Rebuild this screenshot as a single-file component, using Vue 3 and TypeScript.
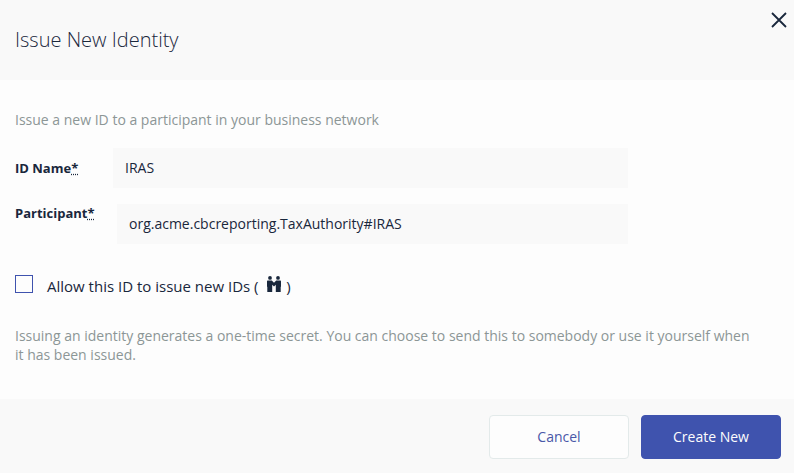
<script setup lang="ts">
import { ref } from 'vue'

const idName = ref('IRAS')
const participant = ref('org.acme.cbcreporting.TaxAuthority#IRAS')
const canIssue = ref(false)
</script>

<template>
  <form class="dialog" @submit.prevent>
    <header class="head">
      <h1>Issue New Identity</h1>
      <button class="close" type="button" aria-label="Close">
        <svg width="16" height="16" viewBox="0 0 16 16" fill="none" stroke="currentColor" stroke-width="1.8">
          <path d="M1 1L15 15M15 1L1 15" />
        </svg>
      </button>
    </header>

    <section class="body">
      <p>Issue a new ID to a participant in your business network</p>

      <div class="fields">
        <div class="field">
          <label for="id-name">ID Name<abbr>*</abbr></label>
          <input id="id-name" v-model="idName" type="text" />
        </div>
        <div class="field participant">
          <label for="participant">Participant<abbr>*</abbr></label>
          <input id="participant" v-model="participant" type="text" />
        </div>
      </div>

      <div class="check">
        <input id="can-issue" v-model="canIssue" type="checkbox" />
        <label for="can-issue">
          Allow this ID to issue new IDs (
          <svg class="people" width="16" height="16" viewBox="0 0 16 16" fill="currentColor" aria-hidden="true">
            <circle cx="4" cy="1.9" r="1.9" />
            <circle cx="12" cy="1.9" r="1.9" />
            <path d="M1.6 4.6H5.8L8 6.8L10.2 4.6H14.4Q15 4.6 15 5.4V10.8H14.7V16H9.8V8.8L8 10.4L6.2 8.8V16H1.3V10.8H1V5.4Q1 4.6 1.6 4.6Z" />
          </svg>
          )
        </label>
      </div>

      <p class="note">
        Issuing an identity generates a one-time secret. You can choose to send this to
        somebody or use it yourself when it has been issued.
      </p>
    </section>

    <footer class="foot">
      <button class="btn cancel" type="button">Cancel</button>
      <button class="btn create" type="submit">Create New</button>
    </footer>
  </form>
</template>

<style>
body {
  background: #fdfdfd;
}
</style>

<style scoped>
.dialog,
.dialog input,
.dialog button {
  font-family: 'Open Sans', 'Noto Sans', sans-serif;
  font-size: 14px;
  color: #19273c;
  box-sizing: border-box;
}

.dialog {
  display: flex;
  flex-direction: column;
  min-height: 100vh;
  background: #fdfdfd;
}

.head {
  display: flex;
  justify-content: space-between;
  align-items: flex-start;
  padding: 12px 7px 12px 15px;
  background: #f9f9f9;
}

h1 {
  margin: 0;
  padding: 14px 0;
  font-size: 20px;
  font-weight: 300;
  line-height: 28px;
}

.close {
  display: flex;
  padding: 0;
  border: 0;
  background: none;
}

.body {
  flex: 1;
  padding: 30px 15px 34px;
}

p {
  margin: 0;
  line-height: 19px;
  color: #8c9696;
}

.note {
  padding-right: 24px;
}

.fields {
  display: flex;
  flex-direction: column;
  gap: 16px;
  max-width: 613px;
  padding: 19px 0 30px;
}

.field {
  display: grid;
  grid-template-columns: 98px 1fr;
  align-items: center;
}

.field.participant {
  grid-template-columns: 102px 1fr;
  align-items: start;
}

.field label {
  font-size: 13px;
  font-weight: 700;
  line-height: 18px;
}

abbr {
  text-decoration: underline dotted;
}

.field input {
  width: 100%;
  height: 40px;
  padding: 0 12px 2px;
  border: 0;
  border-radius: 0;
  background: #f9f9f9;
}

.check {
  display: flex;
  align-items: flex-start;
  gap: 14px;
  padding-bottom: 30px;
}

.check input {
  appearance: none;
  width: 18px;
  height: 18px;
  margin: 1px 0 0;
  border: 1px solid #3f53ae;
  background: #fdfdfd;
}

.check input:checked {
  background: #3f53ae;
}

.check label {
  padding-top: 2px;
  font-size: 15px;
  line-height: 20px;
}

.people {
  margin-left: 4px;
}

.foot {
  display: flex;
  justify-content: flex-end;
  gap: 12px;
  padding: 16px 13px 14px;
  background: #f9f9f9;
}

.dialog .btn {
  width: 140px;
  height: 44px;
  padding: 0 6px 2px;
  border: 1px solid #e3eaea;
  border-radius: 4px;
}

.dialog .cancel {
  background: #fdfdfd;
  color: #4a58a8;
}

.dialog .create {
  border-color: #3f53ae;
  background: #3f53ae;
  color: #fdfdfd;
}
</style>
